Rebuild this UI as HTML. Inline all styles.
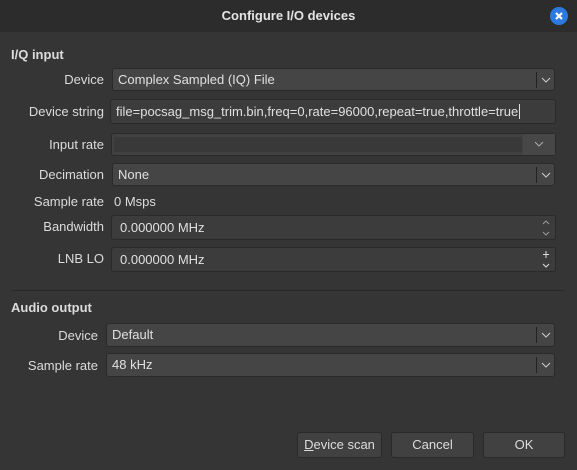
<!DOCTYPE html>
<html><head><style>
*{margin:0;padding:0;box-sizing:border-box}
body{width:577px;height:470px;background:#353535;font-family:"Liberation Sans","DejaVu Sans",sans-serif;font-size:13px;color:#dcdcdc;position:relative;overflow:hidden}
.title{position:absolute;left:0;top:0;width:577px;height:32px;background:#2c2c2c;text-align:center;line-height:32px;font-weight:bold;color:#e4e4e4}
.close{position:absolute;left:550px;top:7px;width:18px;height:18px;border-radius:50%;background:#2a7ae2}
.a{position:absolute}
.lbl{position:absolute;text-align:right;line-height:24px}
.f{position:absolute;background:#454545;border:1px solid #2a2a2a;border-radius:3px;line-height:21px;padding-left:5px;color:#e0e0e0}
.arr{position:absolute;right:0;top:3px;width:18px;height:16px;border-left:1px solid #222}
.h{position:absolute;font-weight:bold;left:11px}
.btn{position:absolute;background:#414141;border:1px solid #2a2a2a;border-radius:3px;text-align:center;line-height:24px}
</style></head><body>
<div class="title">Configure I/O devices</div>
<div class="close"><svg width="18" height="18"><path d="M6 6L12 12M12 6L6 12" stroke="#fff" stroke-width="2.2"/></svg></div>
<div class="h" style="top:47px">I/Q input</div>

<div class="lbl" style="left:0;width:104px;top:68px">Device</div>
<div class="f" style="left:112px;top:68px;width:443px;height:23px">Complex Sampled (IQ) File<div class="arr"><svg width="18" height="16"><path d="M5 6L9 10L13 6" stroke="#ccc" fill="none"/></svg></div></div>

<div class="lbl" style="left:0;width:104px;top:100px">Device string</div>
<div class="f" style="left:110px;top:99px;width:446px;height:25px;line-height:23px;background:#3c3c3c">file=pocsag_msg_trim.bin,freq=0,rate=96000,repeat=true,throttle=true<span style="border-left:1px solid #ddd;margin-left:1px"></span></div>

<div class="lbl" style="left:0;width:104px;top:133px">Input rate</div>
<div class="f" style="left:111px;top:133px;width:445px;height:23px;background:#414141"><div class="a" style="left:2px;top:3px;width:408px;height:15px;background:#393939"></div><div class="a" style="right:0;top:0;width:32px;height:21px;background:#474747"><svg width="32" height="21"><path d="M12 8L16 12L20 8" stroke="#aaa" fill="none"/></svg></div></div>

<div class="lbl" style="left:0;width:104px;top:163px">Decimation</div>
<div class="f" style="left:112px;top:163px;width:443px;height:23px">None<div class="arr"><svg width="18" height="16"><path d="M5 6L9 10L13 6" stroke="#ccc" fill="none"/></svg></div></div>

<div class="lbl" style="left:0;width:104px;top:190px">Sample rate</div>
<div class="a" style="left:114px;top:190px;line-height:24px">0 Msps</div>

<div class="lbl" style="left:0;width:104px;top:215px">Bandwidth</div>
<div class="f" style="left:111px;top:215px;width:445px;height:25px;line-height:23px;background:#3c3c3c;padding-left:8px">0.000000 MHz<svg class="a" style="right:2px;top:1px" width="14" height="22"><path d="M4 7L7 4L10 7M4 15L7 18L10 15" stroke="#999" fill="none"/></svg></div>

<div class="lbl" style="left:0;width:104px;top:247px">LNB LO</div>
<div class="f" style="left:111px;top:247px;width:445px;height:25px;line-height:23px;background:#3c3c3c;padding-left:8px">0.000000 MHz<svg class="a" style="right:2px;top:1px" width="14" height="22"><path d="M7 2V9M4 5.5H10M4 15L7 18L10 15" stroke="#ddd" fill="none"/></svg></div>

<div class="a" style="left:11px;top:290px;width:554px;height:1px;background:#2a2a2a"></div>
<div class="h" style="top:300px">Audio output</div>

<div class="lbl" style="left:0;width:98px;top:324px">Device</div>
<div class="f" style="left:106px;top:323px;width:449px;height:24px">Default<div class="arr"><svg width="18" height="16"><path d="M5 6L9 10L13 6" stroke="#ccc" fill="none"/></svg></div></div>

<div class="lbl" style="left:0;width:98px;top:354px">Sample rate</div>
<div class="f" style="left:106px;top:353px;width:449px;height:24px">48 kHz<div class="arr"><svg width="18" height="16"><path d="M5 6L9 10L13 6" stroke="#ccc" fill="none"/></svg></div></div>

<div class="btn" style="left:297px;top:432px;width:85px;height:26px"><u>D</u>evice scan</div>
<div class="btn" style="left:391px;top:432px;width:83px;height:26px">Cancel</div>
<div class="btn" style="left:483px;top:432px;width:82px;height:26px">OK</div>
</body></html>
